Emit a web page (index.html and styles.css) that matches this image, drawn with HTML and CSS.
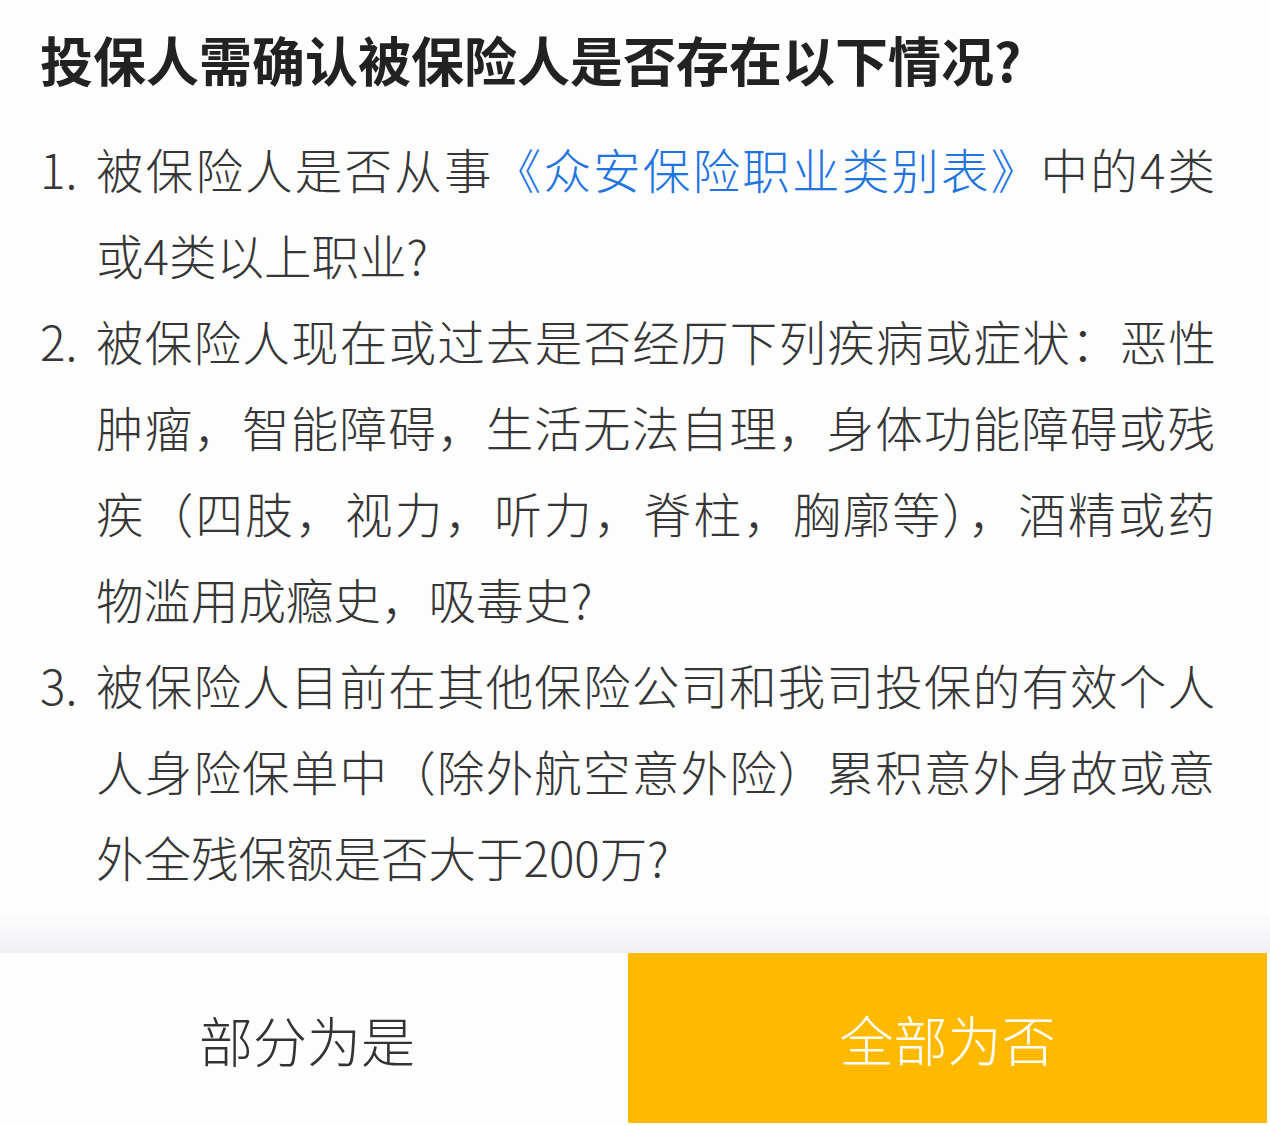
FILE: index.html
```html
<!DOCTYPE html>
<html lang="zh-CN">
<head>
<meta charset="utf-8">
<title>投保告知</title>
<link rel="stylesheet" href="styles.css">
</head>
<body>
<div class="page">
  <main class="content">
    <h1 class="title">投保人需确认被保险人是否存在以下情况?</h1>
    <ol class="list">
      <li class="item">
        <span class="num">1.</span>
        <div class="text">
          <span class="line">被保险人是否从事<a class="link" href="#">《众安保险职业类别表》</a>中的4类</span>
          <span class="last">或4类以上职业?</span>
        </div>
      </li>
      <li class="item">
        <span class="num">2.</span>
        <div class="text">
          <span class="line line-tight">被保险人现在或过去是否经历下列疾病或症状：恶性</span>
          <span class="line">肿瘤，智能障碍，生活无法自理，身体功能障碍或残</span>
          <span class="line">疾（四肢，视力，听力，脊柱，胸廓等），酒精或药</span>
          <span class="last">物滥用成瘾史，吸毒史?</span>
        </div>
      </li>
      <li class="item">
        <span class="num">3.</span>
        <div class="text">
          <span class="line">被保险人目前在其他保险公司和我司投保的有效个人</span>
          <span class="line">人身险保单中（除外航空意外险）累积意外身故或意</span>
          <span class="last">外全残保额是否大于200万?</span>
        </div>
      </li>
    </ol>
  </main>
  <div class="fade"></div>
  <footer class="actions">
    <button class="btn btn-yes" type="button">部分为是</button>
    <button class="btn btn-no" type="button">全部为否</button>
  </footer>
</div>
</body>
</html>
```

FILE: styles.css
```css
* {
  box-sizing: border-box;
}

html, body {
  margin: 0;
  padding: 0;
}

body {
  background: #fdfdfe;
  font-family: "Noto Sans CJK SC", "Noto Sans", sans-serif;
  color: #363636;
}

.page {
  width: 1270px;
  height: 1126px;
  display: flex;
  flex-direction: column;
  overflow: hidden;
}

.content {
  flex: 1;
  padding: 19px 55px 0 40px;
}

.title {
  margin: 0;
  font-size: 53px;
  line-height: 80px;
  font-weight: 700;
  color: #222222;
  white-space: nowrap;
}

.list {
  list-style: none;
  margin: 27px 0 0 0;
  padding: 0;
}

.item {
  display: grid;
  grid-template-columns: 56px 1fr;
  font-size: 47.5px;
  line-height: 86px;
  font-weight: 300;
}

.num {
  color: #363636;
}

.text {
  display: flex;
  flex-direction: column;
}

.line {
  display: block;
  text-align: justify;
  text-align-last: justify;
  white-space: nowrap;
}

.line-tight {
  letter-spacing: -1px;
}

.last {
  display: block;
  white-space: nowrap;
}

.link {
  color: #1f74e0;
  text-decoration: none;
}

.fade {
  height: 40px;
  flex: none;
  background: linear-gradient(to bottom, #fdfdfe 0%, #f0f1f4 100%);
}

.actions {
  flex: none;
  height: 173px;
  display: grid;
  grid-template-columns: 628px 1fr;
  background: #fdfdfe;
}

.btn {
  border: 0;
  margin: 0;
  padding: 0;
  font-family: inherit;
  font-size: 54px;
  font-weight: 300;
  cursor: pointer;
}

.btn-yes {
  background: #fdfdfe;
  color: #333333;
  padding-right: 14px;
}

.btn-no {
  background: #ffba00;
  color: #ffffff;
  margin: 0 3px 3px 0;
}
```
